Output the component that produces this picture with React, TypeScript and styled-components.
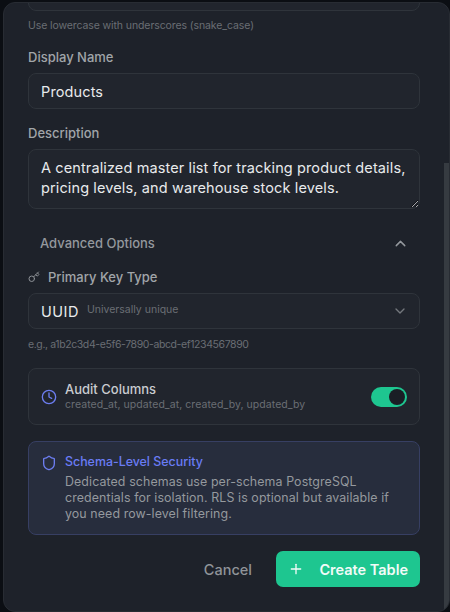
import styled, { createGlobalStyle } from 'styled-components';
import { ChevronDown, ChevronUp, Clock, Key, Plus, Shield } from 'lucide-react';

const GlobalStyle = createGlobalStyle`
  html, body {
    margin: 0;
    height: 100%;
    background: #0b0e13;
    overflow: hidden;
  }
  * { box-sizing: border-box; }
`;

const Page = styled.div`
  height: 612px;
  padding: 2px 0 0 3px;
  font-family: 'Inter', 'Liberation Sans', sans-serif;
`;

const Modal = styled.div`
  position: relative;
  display: flex;
  flex-direction: column;
  justify-content: flex-end;
  width: 447px;
  height: 610px;
  padding: 0 29px 24px 24px;
  background: #1e222a;
  border: 1px solid #282c33;
  border-radius: 12px;
  overflow: hidden;
`;

const ScrollThumb = styled.div`
  position: absolute;
  top: 160px;
  right: 0;
  bottom: 0;
  width: 5px;
  background: #363b41;
`;

const Field = styled.div<{ $top?: number }>`
  flex: none;
  margin-top: ${({ $top }) => $top ?? 0}px;
  margin-bottom: 14px;
`;

const Label = styled.label`
  flex: none;
  display: flex;
  align-items: center;
  gap: 8px;
  height: 20px;
  margin-bottom: 6px;
  font-size: 13px;
  font-weight: 500;
  color: #a1a5a9;
`;

const KeyIcon = styled(Key)`
  color: #8e9297;
`;

const Control = styled.div`
  flex: none;
  display: flex;
  align-items: center;
  height: 36px;
  padding: 0 11px 0 12px;
  background: #21252d;
  border: 1px solid #2f343b;
  border-radius: 8px;
  font-size: 14.5px;
  letter-spacing: 0.12px;
  color: #e8eaec;
`;

const TextArea = styled.textarea`
  display: block;
  width: 100%;
  height: 60px;
  padding: 8px 6px 0 12px;
  background: #21252d;
  border: 1px solid #2f343b;
  border-radius: 8px;
  outline: none;
  font-family: inherit;
  font-size: 14.5px;
  line-height: 20px;
  letter-spacing: 0.12px;
  color: #e8eaec;
`;

const Hint = styled.p<{ $spacing: number; $top: number }>`
  flex: none;
  margin: ${({ $top }) => $top}px 0 0;
  font-size: 10.5px;
  line-height: 14px;
  letter-spacing: ${({ $spacing }) => $spacing}px;
  color: #6a6e74;
`;

const Advanced = styled.div`
  flex: none;
  display: flex;
  align-items: center;
  justify-content: space-between;
  height: 20px;
  margin: 10px 0 14px;
  padding: 0 11px 0 12px;
  font-size: 13px;
  font-weight: 500;
  color: #94989d;
`;

const SelectValue = styled.span`
  letter-spacing: 0.5px;
`;

const SelectNote = styled.span`
  margin: -3px 0 0 8px;
  font-size: 10.5px;
  letter-spacing: 0;
  color: #6a6e74;
`;

const SelectArrow = styled(ChevronDown)`
  margin-left: auto;
  color: #74787d;
`;

const AuditCard = styled.div`
  flex: none;
  display: flex;
  align-items: center;
  height: 57px;
  margin-top: 16px;
  padding: 0 12px;
  background: #21252d;
  border: 1px solid #2f343b;
  border-radius: 8px;
`;

const AuditIcon = styled(Clock)`
  flex: none;
  color: #6c7df0;
`;

const CardText = styled.div`
  flex: 1;
  margin-left: 8px;
`;

const CardTitle = styled.div`
  font-size: 13px;
  font-weight: 500;
  line-height: 17px;
  color: #c9ccd0;
`;

const CardSub = styled.div`
  font-size: 10.5px;
  line-height: 14px;
  letter-spacing: 0.06px;
  color: #6a6e74;
`;

const Toggle = styled.div`
  display: flex;
  justify-content: flex-end;
  align-items: center;
  width: 36px;
  height: 20px;
  padding: 2px;
  background: #1ec690;
  border-radius: 10px;
`;

const Knob = styled.span`
  width: 16px;
  height: 16px;
  background: #1a1e25;
  border-radius: 50%;
`;

const SecurityCard = styled.div`
  flex: none;
  display: flex;
  align-items: flex-start;
  height: 94px;
  margin-top: 16px;
  padding: 12px;
  background: #272d3d;
  border: 1px solid #373f63;
  border-radius: 8px;
`;

const SecurityIcon = styled(Shield)`
  flex: none;
  margin-top: 1px;
  color: #6c7df0;
`;

const SecurityText = styled.div`
  margin-left: 8px;
`;

const SecurityTitle = styled.div`
  font-size: 12.4px;
  font-weight: 500;
  line-height: 16px;
  color: #6a7cf5;
`;

const SecurityBody = styled.p`
  margin: 4px 0 0;
  font-size: 12.4px;
  line-height: 16px;
  letter-spacing: 0.1px;
  color: #95999e;
`;

const Footer = styled.div`
  flex: none;
  display: flex;
  justify-content: flex-end;
  align-items: center;
  gap: 24px;
  margin-top: 16px;
`;

const CancelButton = styled.button`
  padding: 0;
  border: none;
  background: none;
  font-family: inherit;
  font-size: 14.5px;
  font-weight: 500;
  color: #909499;
`;

const CreateButton = styled.button`
  display: flex;
  align-items: center;
  justify-content: space-between;
  width: 144px;
  height: 36px;
  padding: 0 12px;
  border: none;
  border-radius: 7px;
  background: #1ec690;
  font-family: inherit;
  font-size: 14.5px;
  font-weight: 600;
  color: #f2fbf8;
`;

const App = () => {
  return (
    <Page>
      <GlobalStyle />
      <Modal>
        <Control />
        <Hint $spacing={-0.1} $top={8}>Use lowercase with underscores (snake_case)</Hint>
        <Field $top={14}>
          <Label>Display Name</Label>
          <Control>Products</Control>
        </Field>
        <Field>
          <Label>Description</Label>
          <TextArea
            readOnly
            value="A centralized master list for tracking product details, pricing levels, and warehouse stock levels."
          />
        </Field>
        <Advanced>
          Advanced Options
          <ChevronUp size={17} />
        </Advanced>
        <Label>
          <KeyIcon size={12} />
          Primary Key Type
        </Label>
        <Control>
          <SelectValue>UUID</SelectValue>
          <SelectNote>Universally unique</SelectNote>
          <SelectArrow size={16} />
        </Control>
        <Hint $spacing={-0.4} $top={9}>e.g., a1b2c3d4-e5f6-7890-abcd-ef1234567890</Hint>
        <AuditCard>
          <AuditIcon size={16} />
          <CardText>
            <CardTitle>Audit Columns</CardTitle>
            <CardSub>created_at, updated_at, created_by, updated_by</CardSub>
          </CardText>
          <Toggle>
            <Knob />
          </Toggle>
        </AuditCard>
        <SecurityCard>
          <SecurityIcon size={16} />
          <SecurityText>
            <SecurityTitle>Schema-Level Security</SecurityTitle>
            <SecurityBody>
              Dedicated schemas use per-schema PostgreSQL credentials for isolation. RLS is optional but available if you need row-level filtering.
            </SecurityBody>
          </SecurityText>
        </SecurityCard>
        <Footer>
          <CancelButton>Cancel</CancelButton>
          <CreateButton>
            <Plus size={16} />
            Create Table
          </CreateButton>
        </Footer>
        <ScrollThumb />
      </Modal>
    </Page>
  );
};

export default App;
